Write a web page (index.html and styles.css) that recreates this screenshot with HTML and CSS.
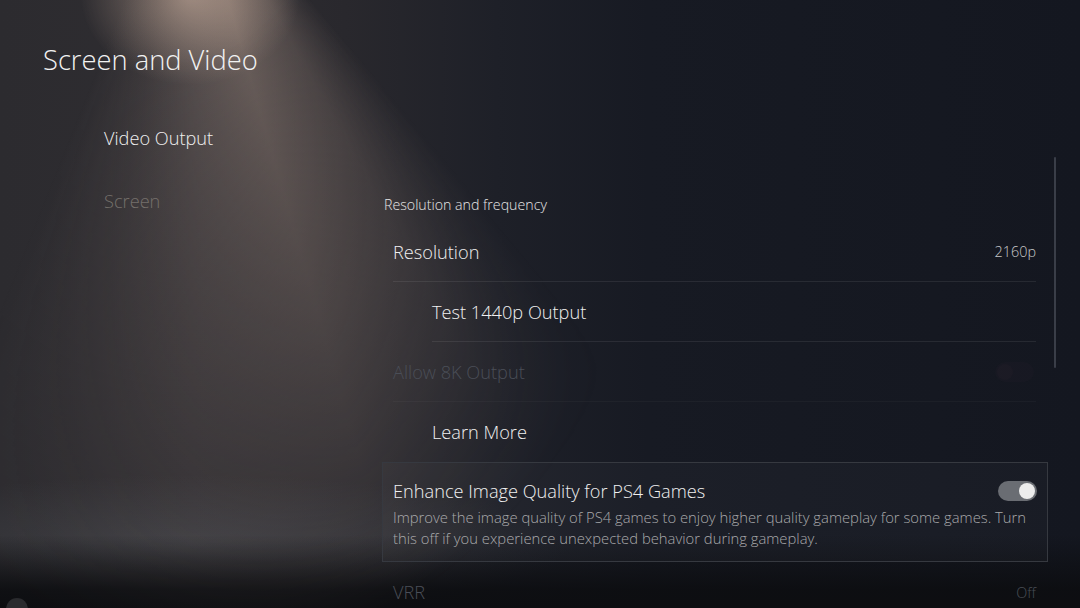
FILE: index.html
```html
<!DOCTYPE html>
<html lang="en">
<head>
<meta charset="utf-8">
<title>Screen and Video</title>
<link rel="stylesheet" href="styles.css">
</head>
<body>
<div class="screen">
  <h1 class="title">Screen and Video</h1>
  <div class="body">
    <nav class="side">
      <div class="side-item active">Video Output</div>
      <div class="side-item dim">Screen</div>
    </nav>
    <main class="content">
      <div class="section-label">Resolution and frequency</div>
      <div class="row">
        <div class="row-inner">
          <span class="row-label">Resolution</span>
          <span class="row-value">2160p</span>
        </div>
      </div>
      <div class="row indent">
        <div class="row-inner">
          <span class="row-label">Test 1440p Output</span>
        </div>
      </div>
      <div class="row disabled">
        <div class="row-inner faint">
          <span class="row-label">Allow 8K Output</span>
          <span class="toggle off"><span class="knob"></span></span>
        </div>
      </div>
      <div class="row indent">
        <div class="row-inner none">
          <span class="row-label">Learn More</span>
        </div>
      </div>
      <div class="focus-box">
        <div class="focus-head">
          <span class="row-label">Enhance Image Quality for PS4 Games</span>
          <span class="toggle on"><span class="knob"></span></span>
        </div>
        <p class="desc">Improve the image quality of PS4 games to enjoy higher quality gameplay for some games. Turn<br>this off if you experience unexpected behavior during gameplay.</p>
      </div>
      <div class="row disabled">
        <div class="row-inner none">
          <span class="row-label">VRR</span>
          <span class="row-value">Off</span>
        </div>
      </div>
    </main>
  </div>
  <div class="scrollbar"></div>
  <div class="corner-dot"></div>
</div>
</body>
</html>
```

FILE: styles.css
```css
html, body {
  margin: 0;
  padding: 0;
  background: #141720;
}

.screen {
  position: relative;
  width: 1080px;
  height: 608px;
  overflow: hidden;
  font-family: "Open Sans", "Noto Sans", sans-serif;
  font-weight: 300;
  color: #f0f0f0;
  background:
    linear-gradient(to bottom, rgba(10,11,14,0) 0%, rgba(10,11,14,0) 88%, rgba(12,13,16,0.9) 97%, #0d0e11 100%),
    radial-gradient(ellipse 380px 70px at 190px 545px, rgba(90,94,100,0.35) 0%, rgba(90,94,100,0) 100%),
    linear-gradient(to right, #2c2b2f 0%, #2f2d31 18%, #29282d 32%, #1e2028 46%, #171a23 60%, #141720 100%);
}

.screen::before {
  content: "";
  position: absolute;
  inset: 0;
  background:
    radial-gradient(ellipse 110px 90px at 190px -5px, rgba(220,190,170,0.55) 0%, rgba(220,190,170,0) 100%),
    conic-gradient(from 140deg at 185px -150px, rgba(160,140,130,0) 0deg, rgba(170,148,136,0.3) 11deg, rgba(190,165,150,0.42) 24deg, rgba(170,150,140,0.3) 38deg, rgba(160,140,130,0.14) 50deg, rgba(160,140,130,0) 62deg);
  -webkit-mask-image: radial-gradient(ellipse 560px 820px at 185px -150px, #000 25%, rgba(0,0,0,0.55) 62%, transparent 100%);
  mask-image: radial-gradient(ellipse 560px 820px at 185px -150px, #000 25%, rgba(0,0,0,0.55) 62%, transparent 100%);
  pointer-events: none;
}

.title,
.body {
  position: relative;
  z-index: 1;
}

.title {
  margin: 0;
  padding: 42px 0 0 43px;
  font-size: 27.3px;
  line-height: 36px;
  font-weight: 300;
  color: #f2f2f2;
}

.body {
  display: flex;
}

.side {
  box-sizing: border-box;
  width: 382px;
  padding: 45px 0 0 104px;
  display: flex;
  flex-direction: column;
  gap: 33px;
}

.side-item {
  font-size: 18.2px;
  line-height: 30px;
}

.side-item.active {
  color: #f0f0f0;
}

.side-item.dim {
  color: #75706b;
}

.content {
  width: 666px;
  padding-top: 117px;
  display: flex;
  flex-direction: column;
}

.section-label {
  font-size: 14.2px;
  line-height: 20px;
  margin: 0 0 7px 2px;
  color: #e6e6e6;
  font-weight: 300;
}

.row {
  height: 60px;
  padding: 0 12px 0 11px;
  display: flex;
}

.row.indent {
  padding-left: 50px;
}

.row-inner {
  flex: 1;
  display: flex;
  align-items: center;
  justify-content: space-between;
  border-bottom: 1px solid rgba(255,255,255,0.08);
}

.row-inner.faint {
  border-bottom-color: rgba(255,255,255,0.03);
}

.row-inner.none {
  border-bottom: none;
}

.row-label {
  font-size: 18.2px;
  line-height: 24px;
}

.row-value {
  font-size: 14.4px;
  color: #c6c6c8;
}

.row.disabled .row-label,
.row.disabled .row-value {
  color: #4a4e57;
}

.toggle {
  position: relative;
  width: 39px;
  height: 20px;
  border-radius: 10px;
  display: inline-block;
}

.toggle .knob {
  position: absolute;
  top: 2px;
  right: 2px;
  width: 16px;
  height: 16px;
  border-radius: 50%;
}

.toggle.on {
  background: #6a6d73;
}

.toggle.on .knob {
  background: #ececec;
}

.toggle.off {
  background: rgba(60,40,50,0.09);
  margin-right: 2px;
}

.toggle.off .knob {
  left: 2px;
  right: auto;
  background: rgba(70,45,55,0.1);
}

.focus-box {
  box-sizing: border-box;
  height: 100px;
  border: 1px solid #363940;
  background: rgba(255,255,255,0.025);
  padding: 16px 10px 0 10px;
}

.focus-head {
  display: flex;
  align-items: center;
  justify-content: space-between;
  height: 24px;
}

.desc {
  margin: 4px 0 0 0;
  font-size: 14.8px;
  line-height: 21px;
  color: #a9a9ab;
  white-space: nowrap;
}

.scrollbar {
  position: absolute;
  left: 1054px;
  top: 157px;
  width: 2px;
  height: 211px;
  background: #3a3e48;
  border-radius: 1px;
}

.corner-dot {
  position: absolute;
  left: 6px;
  top: 598px;
  width: 22px;
  height: 22px;
  border-radius: 50%;
  background: #2a2b2e;
}
```
